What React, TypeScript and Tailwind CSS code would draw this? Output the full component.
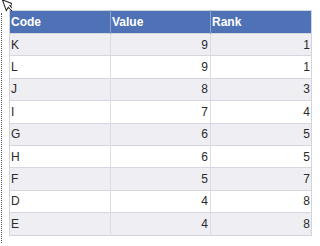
import React from "react";

const rows: [string, number, number][] = [
  ["K", 9, 1],
  ["L", 9, 1],
  ["J", 8, 3],
  ["I", 7, 4],
  ["G", 6, 5],
  ["H", 6, 5],
  ["F", 5, 7],
  ["D", 4, 8],
  ["E", 4, 8],
];

export default function App() {
  return (
    <div
      className="relative h-[246px] w-[320px] overflow-hidden bg-white"
      style={{ fontFamily: '"Liberation Sans", Arial, sans-serif' }}
    >
      {/* dotted focus edge */}
      <div className="absolute left-[1px] top-[13px] h-[230px] border-l border-dotted border-[#555]" />

      {/* mouse cursor */}
      <svg
        className="absolute left-0 top-0"
        width="12"
        height="16"
        viewBox="0 0 12 16"
        aria-hidden="true"
      >
        <path
          d="M0.5 0.5 L0.5 12 L3.5 9.5 L5.5 14 L7.5 13 L5.5 8.5 L9.5 8.5 Z"
          fill="#fff"
          stroke="#222"
          strokeWidth="1"
          transform="rotate(-20 0.5 0.5) translate(2 0)"
        />
      </svg>

      <div className="pl-[9px] pt-[10px]">
        <table className="w-[302px] table-fixed border-collapse border border-[#d3d3dc] text-[12px]">
          <thead>
            <tr className="h-[23px] bg-[#4f72b6] text-left text-white">
              <th className="w-[101px] border-r border-[#8ea3cc] px-[1px] font-bold">Code</th>
              <th className="w-[100px] border-r border-[#8ea3cc] px-[1px] font-bold">Value</th>
              <th className="w-[101px] px-[1px] font-bold">Rank</th>
            </tr>
          </thead>
          <tbody>
            {rows.map(([code, value, rank], i) => (
              <tr
                key={code}
                className={`h-[22.4px] border-t border-[#d6d6e0] text-[#2a2a2a] ${
                  i % 2 === 0 ? "bg-[#eeeef3]" : "bg-white"
                }`}
              >
                <td className="border-r border-[#dcdce4] px-[1px]">{code}</td>
                <td className="border-r border-[#dcdce4] px-[2px] text-right">{value}</td>
                <td className="px-[1px] text-right">{rank}</td>
              </tr>
            ))}
          </tbody>
        </table>
      </div>
    </div>
  );
}
